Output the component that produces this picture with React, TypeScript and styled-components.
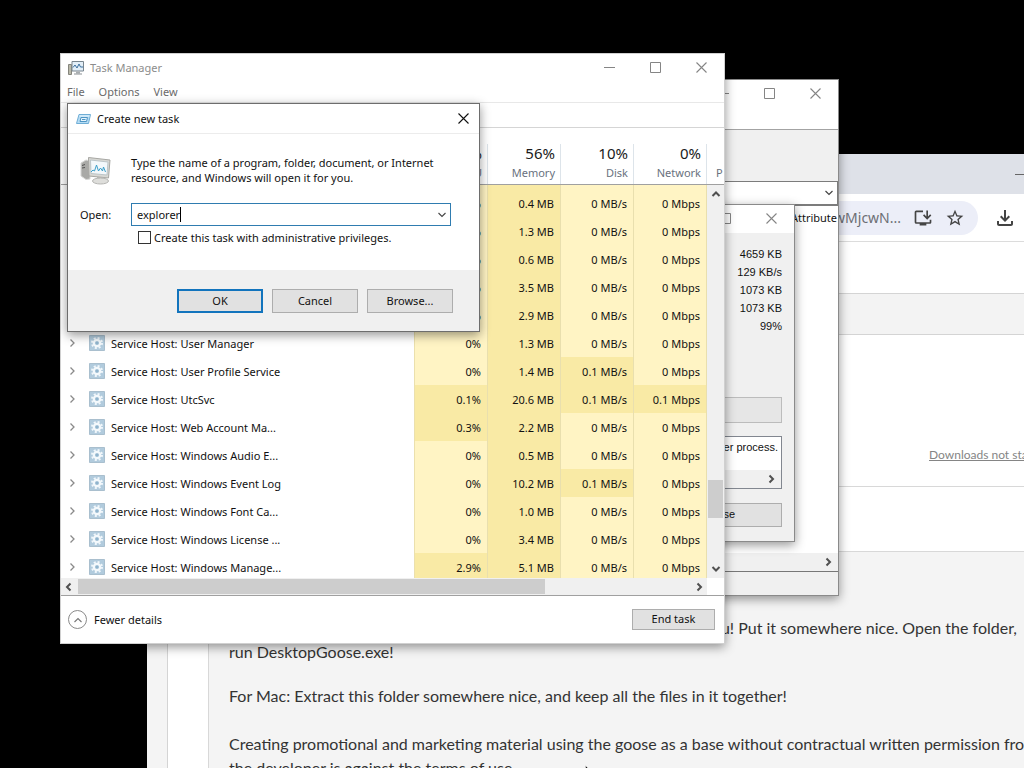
import React from "react";
import styled, { createGlobalStyle } from "styled-components";
import { MdInstallDesktop, MdStarBorder, MdOutlineFileDownload } from "react-icons/md";

const UI = '"Noto Sans", "Open Sans", sans-serif';
const CLASSIC = '"Liberation Sans", Arial, sans-serif';
const WEB = 'Lato, "Open Sans", sans-serif';

const GlobalStyle = createGlobalStyle`
  * { box-sizing: border-box; }
  body { margin: 0; background: #000; font-family: ${UI}; font-size: 11px; color: #111; }
  button, input { font: inherit; color: inherit; margin: 0; }
  p { margin: 0; }
`;

const Desktop = styled.main`
  position: relative;
  min-height: 100vh;
  overflow: hidden;
  background: #000;
`;

const Window = styled.section<{ $x: number; $y: number; $w: number; $h: number; $z: number; $border?: string }>`
  position: absolute;
  left: ${(p) => p.$x}px;
  top: ${(p) => p.$y}px;
  width: ${(p) => p.$w}px;
  height: ${(p) => p.$h}px;
  z-index: ${(p) => p.$z};
  display: flex;
  flex-direction: column;
  overflow: hidden;
  background: #fff;
  border: 1px solid ${(p) => p.$border || "#8a8a8a"};
  box-shadow: 0 3px 10px rgba(0, 0, 0, 0.42);
`;

const TitleBar = styled.header<{ $rule?: boolean }>`
  display: flex;
  align-items: center;
  flex: none;
  height: ${(p) => (p.$rule ? 30 : 28)}px;
  padding-left: ${(p) => (p.$rule ? 8 : 7)}px;
  background: #fff;
  border-bottom: 1px solid ${(p) => (p.$rule ? "#ececec" : "#fff")};
`;

const Title = styled.h1<{ $active?: boolean }>`
  flex: 1;
  margin: 0 0 0 6px;
  font-size: 11px;
  font-weight: 400;
  color: ${(p) => (p.$active ? "#111" : "#8c8c8c")};
`;

const CaptionButton = styled.button<{ $w?: number; $active?: boolean }>`
  display: grid;
  place-items: center;
  width: ${(p) => p.$w || 46}px;
  height: 27px;
  padding: 0;
  border: 0;
  background: none;
  color: ${(p) => (p.$active ? "#111" : "#858585")};
`;

const PushButton = styled.button<{ $w: number; $h?: number; $primary?: boolean }>`
  width: ${(p) => p.$w}px;
  height: ${(p) => p.$h || 24}px;
  padding: 0 0 2px;
  background: #e1e1e1;
  border: ${(p) => (p.$primary ? "2px solid #1274bd" : "1px solid #adadad")};
`;

const Spacer = styled.div`
  flex: 1;
`;

/* Glyphs */
const MinGlyph = () => (
  <svg width="11" height="11" stroke="currentColor" fill="none"><path d="M0 5.5H11" /></svg>
);
const MaxGlyph = () => (
  <svg width="11" height="11" stroke="currentColor" fill="none"><path d="M.5.5H10.5V10.5H.5z" /></svg>
);
const CloseGlyph = () => (
  <svg width="11" height="11" stroke="currentColor" fill="none" strokeWidth="1.1"><path d="M.5.5 10.5 10.5M10.5.5.5 10.5" /></svg>
);

const angles = { up: "M1.5 7 5 3.5 8.5 7", down: "M1.5 3 5 6.5 8.5 3", left: "M6.5 1.5 3 5 6.5 8.5", right: "M3.5 1.5 7 5 3.5 8.5" };
const Arrow = ({ dir, color = "#505050", weight = 2 }: { dir: keyof typeof angles; color?: string; weight?: number }) => (
  <svg width="10" height="10" viewBox="0 0 10 10" fill="none" stroke={color} strokeWidth={weight}><path d={angles[dir]} /></svg>
);

const TaskManagerIcon = () => (
  <svg width="16" height="16" viewBox="0 0 16 16">
    <path d="M.5 4.5h3v10h-3z" fill="#b9b9a9" stroke="#85857d" />
    <path d="M4 1.5h11.5v9.5H4z" fill="#e2eef7" stroke="#78858e" />
    <path d="M5 7.5 7 5l2 3 2-4 1.500 3H15" fill="none" stroke="#3b6f9e" />
    <path d="M8 11.500h4v2H8z" fill="#a8adb0" />
    <path d="M6 14h8" stroke="#8a9094" />
  </svg>
);

const RunIcon = () => (
  <svg width="15" height="12" viewBox="0 0 15 12">
    <path d="M3 1.500h11.500l-2 9H.5z" fill="#b5dcf4" stroke="#6faed6" />
    <path d="M3.500 3h10" stroke="#e9f6fd" />
    <path d="M5 4.500h6.500l-1 4H4z" fill="#e6f5fd" stroke="#4f95c4" />
    <path d="M6 6.500h3.500" stroke="#4f95c4" />
  </svg>
);

const MonitorIcon = () => (
  <svg width="32" height="30" viewBox="0 0 32 30">
    <path d="M1 8 6 5l4 1v18l-4 .5L1 21z" fill="#a9a9a6" stroke="#d7d7d5" />
    <path d="M2 10.500 5 9.500M2 13l3-.5" stroke="#555" />
    <path d="M8.500 2.500 30 5l-1.500 18-19.500-2z" fill="#d8d8d4" stroke="#a7a7a3" />
    <path d="M10.500 5 28 7 27 20 11 18.500z" fill="#f3f8fb" stroke="#bcc5c8" />
    <path d="m11 17 2-2 1.500 1 2-6 2 6 2-3 2 3 1-4 2 5" fill="none" stroke="#3c9fca" strokeWidth="1" />
    <path d="m17 22 7 .5v3h-7z" fill="#b5b5b2" />
    <ellipse cx="20.500" cy="26" rx="8" ry="3" fill="#dededb" stroke="#b5b5b2" />
  </svg>
);

const GearIcon = () => (
  <svg width="16" height="16" viewBox="0 0 16 16">
    <path d="M.5.5h15v15H.5z" fill="#b1cbdd" stroke="#a9bfce" />
    <circle cx="8" cy="8" r="5" fill="none" stroke="#f1f7fb" strokeWidth="2" strokeDasharray="2 1.930" />
    <circle cx="8" cy="8" r="3.200" fill="none" stroke="#f4f9fc" strokeWidth="2.200" />
    <circle cx="8" cy="8" r="1.500" fill="#8fb4cd" />
  </svg>
);

/* Task Manager */
const MenuBar = styled.nav`
  display: flex;
  align-items: center;
  flex: none;
  height: 21px;
  padding-left: 6px;
  gap: 14px;
  border-bottom: 1px solid #e8e8e8;
`;

const MenuItem = styled.button`
  padding: 0;
  border: 0;
  background: none;
  color: #6a6a6a;
  font-size: 11px;
  line-height: 18px;
`;

const TabStrip = styled.div`
  flex: none;
  height: 25px;
  border-bottom: 1px solid #d5d5d5;
`;

const ListArea = styled.div`
  display: flex;
  flex: none;
  height: 450px;
  overflow: hidden;
`;

const ProcessTable = styled.table`
  width: 646px;
  flex: none;
  table-layout: fixed;
  border-collapse: separate;
  border-spacing: 0;
`;

const NameCol = styled.col``;
const ValueCol = styled.col`
  width: 73px;
`;

const HeadCell = styled.th`
  height: 57px;
  padding: 0 6px 2px 0;
  vertical-align: bottom;
  text-align: right;
  font-weight: 400;
  font-size: 11px;
  line-height: 18px;
  color: #69717e;
  border-bottom: 1px solid #a0a0a0;
  background: linear-gradient(#dde4ea, #dde4ea) right bottom / 1px 40px no-repeat;
`;

const HeadValue = styled.span`
  display: block;
  font-size: 15px;
  line-height: 22px;
  color: #1a1a1a;
`;

const Row = styled.tr<{ $sliver?: boolean }>`
  height: ${(p) => (p.$sliver ? 4 : 28)}px;
`;

const NameCell = styled.td`
  padding: 0 0 0 6px;
  border-right: 1px solid #ebe0ad;
`;

const NameContent = styled.div`
  display: flex;
  align-items: center;
  height: 28px;
  white-space: nowrap;
`;

const IconSlot = styled.span`
  display: flex;
  margin: 0 6px 0 12px;
`;

const ValueCell = styled.td<{ $hot?: boolean }>`
  padding: 0 6px 0 0;
  text-align: right;
  white-space: nowrap;
  background: ${(p) => (p.$hot ? "#f9eaa5" : "#fff4c4")};
  border-right: 1px solid #e9dfae;
`;

const ListSide = styled.div`
  display: flex;
  flex: 1;
  flex-direction: column;
`;

const SideHead = styled.div`
  height: 57px;
  flex: none;
  padding: 36px 0 0 9px;
  overflow: hidden;
  font-size: 11px;
  line-height: 18px;
  color: #69717e;
  border-bottom: 1px solid #a0a0a0;
`;

const VScroll = styled.div`
  display: flex;
  flex: 1;
  flex-direction: column;
  align-items: center;
  padding: 4px 0;
  background: #f0f0f0;
`;

const VThumb = styled.div`
  width: 15px;
  height: 38px;
  margin: 281px 0 auto;
  background: #cdcdcd;
`;

const HScroll = styled.div`
  display: flex;
  align-items: center;
  flex: none;
  height: 17px;
  margin-right: 17px;
  padding: 0 3px;
  background: #f0f0f0;
`;

const HThumb = styled.div`
  width: 467px;
  height: 15px;
  margin-left: 4px;
  background: #cdcdcd;
`;

const Footer = styled.footer`
  display: flex;
  flex: 1;
  align-items: center;
  justify-content: space-between;
  padding: 0 9px 0 7px;
  border-top: 1px solid #a0a0a0;
`;

const DetailsButton = styled.button`
  display: flex;
  align-items: center;
  gap: 7px;
  padding: 0;
  border: 0;
  background: none;
`;

const Ring = styled.span`
  display: grid;
  place-items: center;
  width: 19px;
  height: 19px;
  border: 1px solid #8a8a8a;
  border-radius: 50%;
`;

type Process = [string, string, string, string, string];
const processes: Process[] = [
  ["Service Host", "0%", "0.4 MB", "0 MB/s", "0 Mbps"],
  ["Service Host", "0%", "1.3 MB", "0 MB/s", "0 Mbps"],
  ["Service Host", "0%", "0.6 MB", "0 MB/s", "0 Mbps"],
  ["Service Host", "0%", "3.5 MB", "0 MB/s", "0 Mbps"],
  ["Service Host", "0%", "2.9 MB", "0 MB/s", "0 Mbps"],
  ["Service Host: User Manager", "0%", "1.3 MB", "0 MB/s", "0 Mbps"],
  ["Service Host: User Profile Service", "0%", "1.4 MB", "0.1 MB/s", "0 Mbps"],
  ["Service Host: UtcSvc", "0.1%", "20.6 MB", "0.1 MB/s", "0.1 Mbps"],
  ["Service Host: Web Account Ma...", "0.3%", "2.2 MB", "0 MB/s", "0 Mbps"],
  ["Service Host: Windows Audio E...", "0%", "0.5 MB", "0 MB/s", "0 Mbps"],
  ["Service Host: Windows Event Log", "0%", "10.2 MB", "0.1 MB/s", "0 Mbps"],
  ["Service Host: Windows Font Ca...", "0%", "1.0 MB", "0 MB/s", "0 Mbps"],
  ["Service Host: Windows License ...", "0%", "3.4 MB", "0 MB/s", "0 Mbps"],
  ["Service Host: Windows Manage...", "2.9%", "5.1 MB", "0 MB/s", "0 Mbps"],
];
const headings = [["3%", "CPU"], ["56%", "Memory"], ["10%", "Disk"], ["0%", "Network"]];

const TaskManager = () => (
  <Window $x={60} $y={53} $w={665} $h={591} $z={4} $border="#d0d0d0" aria-label="Task Manager">
    <TitleBar>
      <TaskManagerIcon />
      <Title>Task Manager</Title>
      <CaptionButton aria-label="Minimize"><MinGlyph /></CaptionButton>
      <CaptionButton aria-label="Maximize"><MaxGlyph /></CaptionButton>
      <CaptionButton aria-label="Close"><CloseGlyph /></CaptionButton>
    </TitleBar>
    <MenuBar>
      <MenuItem>File</MenuItem>
      <MenuItem>Options</MenuItem>
      <MenuItem>View</MenuItem>
    </MenuBar>
    <TabStrip />
    <ListArea>
      <ProcessTable>
        <colgroup>
          <NameCol /><ValueCol /><ValueCol /><ValueCol /><ValueCol />
        </colgroup>
        <thead>
          <tr>
            <HeadCell aria-label="Name" />
            {headings.map(([value, label]) => (
              <HeadCell key={label} scope="col"><HeadValue>{value}</HeadValue>{label}</HeadCell>
            ))}
          </tr>
        </thead>
        <tbody>
          <Row $sliver>
            <NameCell /><ValueCell /><ValueCell $hot /><ValueCell /><ValueCell />
          </Row>
          {processes.map(([name, cpu, memory, disk, network], i) => (
            <Row key={i}>
              <NameCell>
                <NameContent>
                  <Arrow dir="right" color="#8a8a8a" weight={1.3} />
                  <IconSlot><GearIcon /></IconSlot>
                  {name}
                </NameContent>
              </NameCell>
              <ValueCell $hot={cpu !== "0%"}>{cpu}</ValueCell>
              <ValueCell $hot>{memory}</ValueCell>
              <ValueCell $hot={disk !== "0 MB/s"}>{disk}</ValueCell>
              <ValueCell $hot={network !== "0 Mbps"}>{network}</ValueCell>
            </Row>
          ))}
        </tbody>
      </ProcessTable>
      <ListSide>
        <SideHead>P</SideHead>
        <VScroll><Arrow dir="up" /><VThumb /><Arrow dir="down" /></VScroll>
      </ListSide>
    </ListArea>
    <HScroll><Arrow dir="left" /><HThumb /><Spacer /><Arrow dir="right" /></HScroll>
    <Footer>
      <DetailsButton><Ring><Arrow dir="up" color="#777" weight={1.1} /></Ring>Fewer details</DetailsButton>
      <PushButton $w={83} $h={21}>End task</PushButton>
    </Footer>
  </Window>
);

/* Create new task */
const Prompt = styled.div`
  display: flex;
  flex: none;
  height: 67px;
  padding: 21px 12px 0;
  gap: 19px;
  line-height: 15px;
`;

const OpenRow = styled.div`
  display: flex;
  align-items: center;
  flex: none;
  margin: 2px 28px 0 12px;
`;

const OpenLabel = styled.label`
  width: 51px;
`;

const Combo = styled.div`
  display: flex;
  align-items: center;
  flex: 1;
  height: 23px;
  padding-left: 5px;
  border: 1px solid #2f7cb0;
`;

const ComboInput = styled.input`
  field-sizing: content;
  padding: 0;
  border: 0;
  outline: 0;
  background: none;
`;

const Caret = styled.span`
  width: 1px;
  height: 15px;
  background: #000;
`;

const ComboButton = styled.button`
  display: flex;
  margin-left: auto;
  padding: 3px;
  border: 0;
  background: none;
`;

const AdminRow = styled.label`
  display: flex;
  align-items: center;
  align-self: flex-start;
  height: 22px;
  margin-left: 70px;
  gap: 3px;
`;

const TickBox = styled.input`
  appearance: none;
  width: 13px;
  height: 13px;
  border: 1px solid #333;
  background: #fff;
`;

const Actions = styled.footer`
  display: flex;
  flex: none;
  height: 61px;
  margin-top: auto;
  padding: 19px 26px 0;
  gap: 9px;
  justify-content: flex-end;
  background: #f0f0f0;
`;

const CreateTask = () => (
  <Window $x={67} $y={103} $w={413} $h={229} $z={5} $border="#6d6d6d" role="dialog" aria-label="Create new task">
    <TitleBar $rule>
      <RunIcon />
      <Title $active>Create new task</Title>
      <CaptionButton $w={31} $active aria-label="Close"><CloseGlyph /></CaptionButton>
    </TitleBar>
    <Prompt>
      <MonitorIcon />
      <p>Type the name of a program, folder, document, or Internet<br />resource, and Windows will open it for you.</p>
    </Prompt>
    <OpenRow>
      <OpenLabel htmlFor="open">Open:</OpenLabel>
      <Combo>
        <ComboInput id="open" defaultValue="explorer" />
        <Caret />
        <ComboButton aria-label="Show recent"><Arrow dir="down" color="#444" weight={1.1} /></ComboButton>
      </Combo>
    </OpenRow>
    <AdminRow><TickBox type="checkbox" />Create this task with administrative privileges.</AdminRow>
    <Actions>
      <PushButton $w={86} $primary>OK</PushButton>
      <PushButton $w={86}>Cancel</PushButton>
      <PushButton $w={86}>Browse...</PushButton>
    </Actions>
  </Window>
);

/* Archive manager behind the Task Manager */
const MenuGap = styled.div`
  flex: none;
  height: 22px;
  border-bottom: 1px solid #a3a3a3;
`;

const ToolPanel = styled.div`
  flex: none;
  height: 51px;
  background: #f0f0f0;
`;

const AddressBox = styled.div`
  display: flex;
  align-items: center;
  justify-content: flex-end;
  flex: none;
  height: 25px;
  padding-right: 3px;
  border: 1px solid #7c7c7c;
  border-bottom-width: 2px;
`;

const ColumnHead = styled.div`
  display: flex;
  justify-content: flex-end;
  flex: 1;
  padding: 4px 1px 0;
`;

const WideScroll = styled.div`
  display: flex;
  align-items: center;
  justify-content: flex-end;
  flex: none;
  height: 18px;
  padding-right: 5px;
  background: #f0f0f0;
`;

const StatusBar = styled.div`
  flex: none;
  height: 24px;
  border-top: 1px solid #777;
  background: #f0f0f0;
`;

const ArchiveWindow = () => (
  <Window $x={300} $y={79} $w={539} $h={517} $z={2} aria-label="Archive">
    <TitleBar>
      <Spacer />
      <CaptionButton aria-label="Minimize"><MinGlyph /></CaptionButton>
      <CaptionButton aria-label="Maximize"><MaxGlyph /></CaptionButton>
      <CaptionButton aria-label="Close"><CloseGlyph /></CaptionButton>
    </TitleBar>
    <MenuGap />
    <ToolPanel />
    <AddressBox><Arrow dir="down" color="#444" weight={1.2} /></AddressBox>
    <ColumnHead>Attribute</ColumnHead>
    <WideScroll><Arrow dir="right" /></WideScroll>
    <StatusBar />
  </Window>
);

/* Extraction progress */
const ProgressBody = styled.div`
  display: flex;
  flex: 1;
  flex-direction: column;
  padding: 12px 12px 15px;
  background: #f0f0f0;
  font-family: ${CLASSIC};
`;

const Stats = styled.ul`
  margin: 0;
  padding: 0;
  list-style: none;
  text-align: right;
  line-height: 18px;
`;

const ProgressTrack = styled.div`
  height: 26px;
  margin-top: 62px;
  background: #e6e6e6;
  border: 1px solid #bcbcbc;
`;

const MessageBox = styled.div`
  display: flex;
  flex-direction: column;
  justify-content: space-between;
  height: 53px;
  margin: 13px 0 14px;
  border: 1px solid #828790;
  background: #fff;
  text-align: right;
`;

const Message = styled.p`
  padding: 3px 3px 0;
  line-height: 15px;
`;

const CloseRow = styled.div`
  display: flex;
  justify-content: flex-end;
`;

const ProgressWindow = () => (
  <Window $x={400} $y={204} $w={395} $h={338} $z={3} aria-label="Progress">
    <TitleBar>
      <Spacer />
      <CaptionButton aria-label="Maximize"><MaxGlyph /></CaptionButton>
      <CaptionButton aria-label="Close"><CloseGlyph /></CaptionButton>
    </TitleBar>
    <ProgressBody>
      <Stats>
        <li>4659 KB</li>
        <li>129 KB/s</li>
        <li>1073 KB</li>
        <li>1073 KB</li>
        <li>99%</li>
      </Stats>
      <ProgressTrack />
      <MessageBox>
        <Message>another process.</Message>
        <WideScroll><Arrow dir="right" /></WideScroll>
      </MessageBox>
      <CloseRow><PushButton $w={122}>Close</PushButton></CloseRow>
    </ProgressBody>
  </Window>
);

/* Web browser */
const Browser = styled.section`
  position: absolute;
  left: 147px;
  right: 0;
  top: 154px;
  bottom: 0;
  z-index: 1;
  display: flex;
  flex-direction: column;
  overflow: hidden;
  background: #f4f4f4;
  font-family: ${WEB};
  color: #333;
`;

const BrowserTabs = styled.div`
  display: flex;
  justify-content: flex-end;
  align-items: center;
  flex: none;
  height: 40px;
  overflow: hidden;
  background: #dee1e8;
  color: #666;
`;

const EdgeCaption = styled.button`
  width: 9px;
  height: 11px;
  padding: 0;
  border: 0;
  overflow: hidden;
  background: none;
  display: flex;
`;

const AddressBar = styled.div`
  display: flex;
  align-items: center;
  flex: none;
  height: 48px;
  padding: 0 7px 0 120px;
  gap: 15px;
  background: #fff;
  border-bottom: 1px solid #dcdcdc;
  color: #444;
`;

const UrlPill = styled.div`
  display: flex;
  flex: 1;
  align-items: center;
  justify-content: flex-end;
  height: 34px;
  padding-right: 13px;
  gap: 12px;
  border-radius: 17px;
  background: #eceef8;
  font-family: ${UI};
  font-size: 14px;
`;

const Url = styled.span`
  color: #6c6e74;
`;

const IconButton = styled.button`
  display: flex;
  padding: 0;
  border: 0;
  background: none;
`;

const PageHead = styled.div`
  flex: none;
  height: 52px;
  background: #fff;
  border-bottom: 1px solid #d4d4d4;
`;

const PageNav = styled.div`
  flex: none;
  height: 41px;
  border-bottom: 1px solid #d4d4d4;
  background: #f3f3f3;
`;

const Sheet = styled.article`
  display: flex;
  flex: 1;
  flex-direction: column;
  margin-left: 20px;
  border-left: 1px solid #d4d4d4;
  background: #fff;
`;

const DownloadBlock = styled.div`
  display: flex;
  align-items: flex-end;
  justify-content: flex-end;
  flex: none;
  height: 152px;
  padding-bottom: 22px;
  overflow: hidden;
  border-bottom: 1px solid #d8d8d8;
`;

const HelpLink = styled.a`
  width: 95px;
  overflow: hidden;
  white-space: nowrap;
  font-size: 12px;
  line-height: 18px;
  color: #858585;
`;

const Strip = styled.div`
  flex: none;
  height: 64px;
`;

const Description = styled.div`
  flex: 1;
  margin-left: 40px;
  padding: 64px 0 0 20px;
  overflow: hidden;
  border: solid #d8d8d8;
  border-width: 1px 0 0 1px;
  background: #f4f4f4;
  font-size: 16px;
  line-height: 24px;
  white-space: nowrap;
`;

const Paragraph = styled.p<{ $gap?: number }>`
  margin-bottom: ${(p) => p.$gap || 0}px;
`;

const FullLine = styled.span`
  display: flex;
  justify-content: flex-end;
  margin-right: 7px;
`;

const BrowserWindow = () => (
  <Browser aria-label="Browser">
    <BrowserTabs><EdgeCaption aria-label="Minimize"><MinGlyph /></EdgeCaption></BrowserTabs>
    <AddressBar>
      <UrlPill>
        <Url>wMjcwN...</Url>
        <IconButton aria-label="Install"><MdInstallDesktop size={20} /></IconButton>
        <IconButton aria-label="Bookmark"><MdStarBorder size={20} /></IconButton>
      </UrlPill>
      <IconButton aria-label="Downloads"><MdOutlineFileDownload size={24} /></IconButton>
    </AddressBar>
    <PageHead />
    <PageNav />
    <Sheet>
      <DownloadBlock><HelpLink href="#help">Downloads not starting?</HelpLink></DownloadBlock>
      <Strip />
      <Description>
        <Paragraph $gap={20}>
          <FullLine>you! Put it somewhere nice. Open the folder,</FullLine>
          run DesktopGoose.exe!
        </Paragraph>
        <Paragraph $gap={24}>For Mac: Extract this folder somewhere nice, and keep all the files in it together!</Paragraph>
        <Paragraph>
          Creating promotional and marketing material using the goose as a base without contractual written permission from<br />
          the developer is against the terms of use.
        </Paragraph>
      </Description>
    </Sheet>
  </Browser>
);

const Pointer = styled.svg`
  position: absolute;
  left: 585px;
  top: 765px;
  z-index: 6;
`;

export default function App() {
  return (
    <>
      <GlobalStyle />
      <Desktop>
        <BrowserWindow />
        <ArchiveWindow />
        <ProgressWindow />
        <TaskManager />
        <CreateTask />
        <Pointer width="12" height="19" viewBox="0 0 12 19" aria-hidden="true">
          <path d="M.5.5v16l4-4 3 6 2-1-3-5.500h5z" fill="#111" stroke="#fff" strokeWidth=".5" />
        </Pointer>
      </Desktop>
    </>
  );
}
